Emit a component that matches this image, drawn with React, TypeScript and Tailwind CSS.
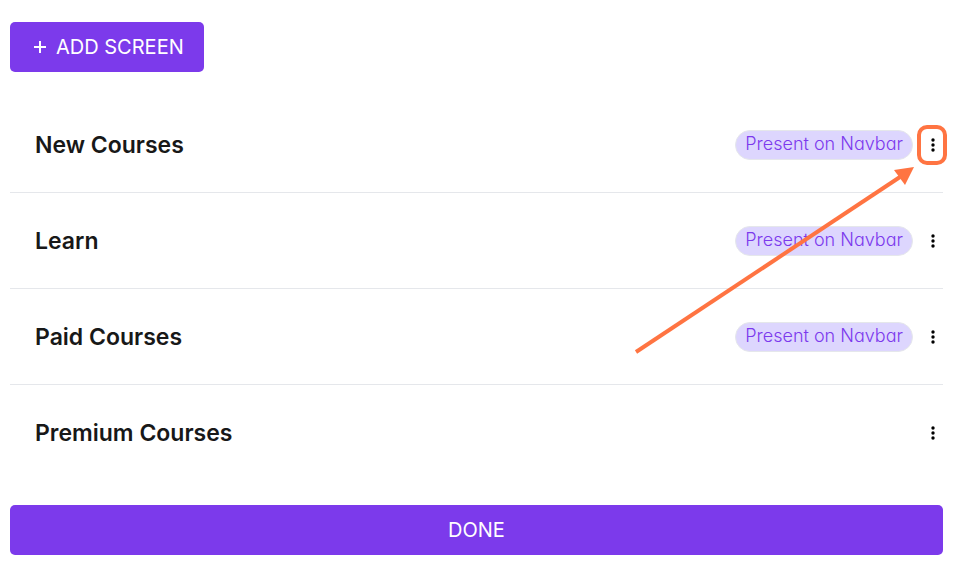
import React, { useState } from 'react';

interface Screen {
  id: string;
  name: string;
  onNavbar: boolean;
}

const initialScreens: Screen[] = [
  { id: 'new-courses', name: 'New Courses', onNavbar: true },
  { id: 'learn', name: 'Learn', onNavbar: true },
  { id: 'paid-courses', name: 'Paid Courses', onNavbar: true },
  { id: 'premium-courses', name: 'Premium Courses', onNavbar: false },
];

const DotsIcon = () => (
  <svg className="w-4 h-4" viewBox="0 0 16 16" fill="currentColor" aria-hidden="true">
    <circle cx="8" cy="3" r="1.7" />
    <circle cx="8" cy="8" r="1.7" />
    <circle cx="8" cy="13" r="1.7" />
  </svg>
);

// Outline and arrow pointing at the menu button
const MenuHint = () => (
  <>
    <span className="absolute -left-[6px] -right-1 -inset-y-2 rounded-[10px] border-4 border-[#ff7442] pointer-events-none" />
    <svg
      className="absolute top-[34px] right-[29px] w-[280px] h-[190px] max-w-none z-10 pointer-events-none"
      viewBox="0 0 280 190"
      fill="none"
      aria-hidden="true"
    >
      <path d="M2 185L266 10" stroke="#ff7442" strokeWidth="4" />
      <path d="M280 0L260 3L271 18Z" fill="#ff7442" />
    </svg>
  </>
);

interface ScreenRowProps {
  screen: Screen;
  highlighted: boolean;
}

const ScreenRow: React.FC<ScreenRowProps> = ({ screen, highlighted }) => (
  <li className="flex items-center justify-between h-24 pl-[25px] border-b border-gray-200 last:h-[95px] last:border-b-0">
    <h2 className="text-[23px] leading-8 font-semibold text-[#181818]">{screen.name}</h2>
    <div className="flex items-center gap-[10px]">
      {screen.onNavbar && (
        <span className="flex items-center h-[30px] px-[9px] pb-[2px] rounded-full border border-gray-200 bg-[#ddd6fe] text-[#7c3aed] text-lg font-light [font-feature-settings:'cv11']">
          Present on Navbar
        </span>
      )}
      <button
        type="button"
        aria-label={`Options for ${screen.name}`}
        className="relative flex items-center justify-center w-5 h-6 text-black cursor-pointer"
      >
        <DotsIcon />
        {highlighted && <MenuHint />}
      </button>
    </div>
  </li>
);

export default function App() {
  const [screens, setScreens] = useState<Screen[]>(initialScreens);

  const handleAdd = () => {
    setScreens([...screens, { id: `screen-${screens.length + 1}`, name: 'New Screen', onNavbar: false }]);
  };

  return (
    <main className="flex flex-col gap-[25px] pt-[22px] pb-[19px] pl-[10px] pr-[14px] bg-white font-['Inter',sans-serif]">
      <button
        type="button"
        onClick={handleAdd}
        className="self-start flex items-center gap-2 h-[50px] pl-[22px] pr-5 rounded-[5px] bg-[#7c3aeb] text-white text-xl cursor-pointer"
      >
        <svg className="w-4 h-4" viewBox="0 0 16 16" fill="none" aria-hidden="true">
          <path d="M8 2v12M2 8h12" stroke="currentColor" strokeWidth="2" />
        </svg>
        ADD SCREEN
      </button>

      <ul>
        {screens.map((screen, index) => (
          <ScreenRow key={screen.id} screen={screen} highlighted={index === 0} />
        ))}
      </ul>

      <button
        type="button"
        className="w-full h-[50px] rounded-[5px] bg-[#7c3aeb] text-white text-xl cursor-pointer"
      >
        DONE
      </button>
    </main>
  );
}
